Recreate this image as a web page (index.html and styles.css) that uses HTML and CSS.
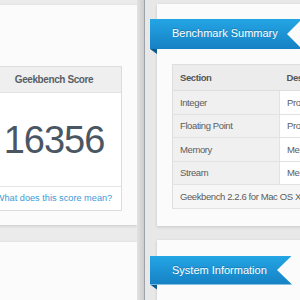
FILE: index.html
```html
<!DOCTYPE html>
<html lang="en">
<head>
    <meta charset="UTF-8">
    <meta name="viewport" content="width=device-width, initial-scale=1.0">
    <title>Geekbench Browser</title>
    <link rel="stylesheet" href="styles.css">
</head>
<body>
    <div class="page">
        <aside class="left">
            <div class="left-cards">
                <section class="card score-card">
                    <div class="score-box">
                        <div class="score-head">Geekbench Score</div>
                        <div class="score-value">16356</div>
                        <div class="score-link"><a href="#">What does this score mean?</a></div>
                    </div>
                </section>
                <section class="card empty-card"></section>
            </div>
            <div class="shade"></div>
            <div class="divider"></div>
        </aside>
        <main class="right">
            <section class="card summary-card">
                <h2 class="ribbon ribbon-wide">Benchmark Summary</h2>
                <div class="ribbon-fold"></div>
                <table class="summary">
                    <tr>
                        <th>Section</th>
                        <th>Description</th>
                    </tr>
                    <tr>
                        <td class="name">Integer</td>
                        <td>Processor integer performance</td>
                    </tr>
                    <tr>
                        <td class="name">Floating Point</td>
                        <td>Processor floating point performance</td>
                    </tr>
                    <tr>
                        <td class="name">Memory</td>
                        <td>Memory performance</td>
                    </tr>
                    <tr>
                        <td class="name">Stream</td>
                        <td>Memory bandwidth performance</td>
                    </tr>
                    <tr>
                        <td class="foot" colspan="2">Geekbench 2.2.6 for Mac OS X x86 (64-bit)</td>
                    </tr>
                </table>
            </section>
            <section class="card system-card">
                <h2 class="ribbon ribbon-narrow">System Information</h2>
                <div class="ribbon-fold"></div>
            </section>
        </main>
    </div>
</body>
</html>
```

FILE: styles.css
```css
/* Resetting default margin and padding */
* {
    margin: 0;
    padding: 0;
    box-sizing: border-box;
}

html, body {
    width: 300px;
    height: 300px;
    overflow: hidden;
}

body {
    font-family: "Liberation Sans", Arial, sans-serif;
    background-color: #e9e9e9;
    color: #555;
}

.page {
    display: flex;
    height: 300px;
}

/* left column */
.left {
    display: flex;
    margin-left: -30px;
    flex-shrink: 0;
}

.left-cards {
    width: 167px;
    background-color: #ebebeb;
}

.shade {
    width: 7px;
    background: linear-gradient(to right, #e2e2e2, #cdcdcd);
}

.divider {
    width: 1px;
    background-color: #9ea3a9;
}

.card {
    background-color: #fbfbfb;
    box-shadow: 0 1px 3px rgba(0,0,0,0.15);
}

.score-card {
    margin-top: 5px;
    padding: 61px 15px 14px 16px;
}

.score-box {
    border: 1px solid #dcdcdc;
    background-color: #fff;
    text-align: center;
}

.score-head {
    height: 26px;
    line-height: 25px;
    background-color: #efefef;
    border-bottom: 1px solid #e2e2e2;
    font-size: 10px;
    font-weight: bold;
    letter-spacing: -0.4px;
    color: #5a5f66;
}

.score-value {
    height: 94px;
    line-height: 94px;
    font-size: 38px;
    letter-spacing: -1px;
    color: #4a5663;
    border-bottom: 1px solid #e4e4e4;
}

.score-link {
    height: 23px;
    line-height: 23px;
    font-size: 9.2px;
}

.score-link a {
    color: #3d9ad8;
    text-decoration: none;
}

.empty-card {
    margin-top: 17px;
    height: 80px;
}

/* right column */
.right {
    flex: 1;
    background-color: #e8e8e8;
    padding-left: 12px;
}

.summary-card {
    width: 420px;
    margin-top: 4px;
    padding: 15px 0 17px 15px;
}

.ribbon {
    margin-left: -22px;
    height: 30px;
    line-height: 29px;
    padding-left: 22px;
    font-size: 11px;
    font-weight: normal;
    color: #fff;
    text-shadow: 0 -1px 0 rgba(0,0,0,0.2);
    background: linear-gradient(to bottom, #24a5e4, #1581c4);
}

.ribbon-wide {
    width: 152px;
    clip-path: polygon(0 0, 100% 0, 137px 50%, 100% 100%, 0 100%);
}

.ribbon-narrow {
    width: 142px;
    height: 29px;
    line-height: 28px;
    clip-path: polygon(0 0, 100% 0, 127px 50%, 100% 100%, 0 100%);
}

.ribbon-fold {
    margin-left: -22px;
    width: 7px;
    height: 5px;
    background-color: #0e5a8c;
    clip-path: polygon(0 0, 100% 0, 100% 100%);
}

.summary {
    margin-top: 10px;
    border-collapse: collapse;
    font-size: 9.5px;
    letter-spacing: -0.4px;
    border: 1px solid #dedede;
}

.summary th {
    height: 26px;
    text-align: left;
    padding-left: 7px;
    font-weight: bold;
    color: #555;
    background-color: #ececec;
    border-bottom: 1px solid #dedede;
}

.summary td {
    height: 23.5px;
    padding-left: 7px;
    color: #5c5c5c;
    background-color: #fff;
    border-bottom: 1px solid #e2e2e2;
    border-left: 1px solid #e2e2e2;
    white-space: nowrap;
}

.summary th:first-child,
.summary td.name {
    width: 107px;
}

.summary td.name {
    background-color: #f0f0f0;
    border-left: none;
}

.summary td.foot {
    background-color: #f6f6f6;
    border-left: none;
}

.system-card {
    width: 420px;
    margin-top: 14px;
    height: 80px;
    padding: 16px 0 0 15px;
}
```
